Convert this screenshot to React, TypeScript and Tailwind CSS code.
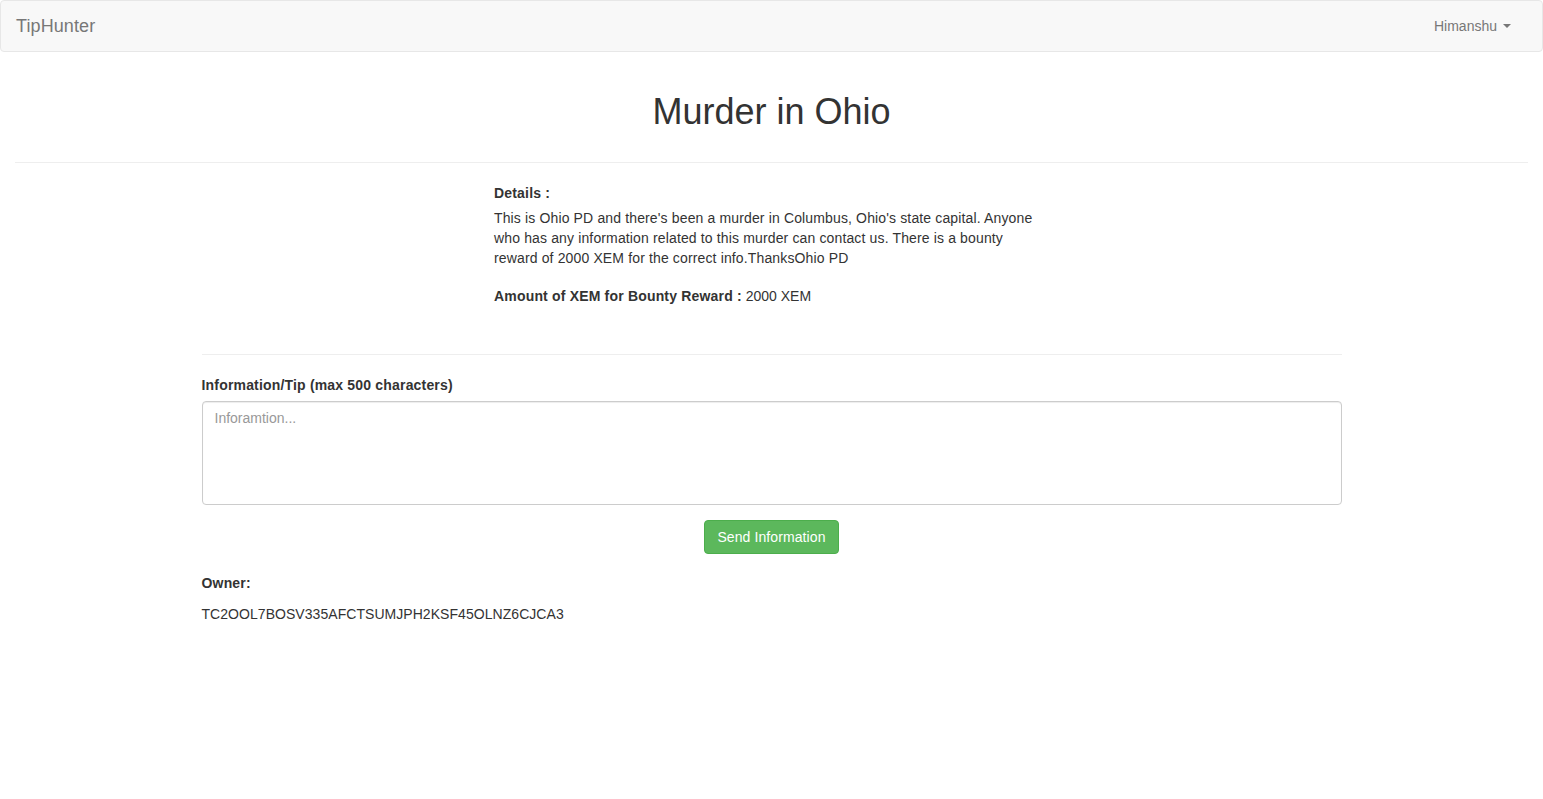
import React from "react";

export default function App() {
  return (
    <div
      className="min-h-[799px] bg-white text-[14px] leading-[20px] text-[#333]"
      style={{ fontFamily: '"Liberation Sans", Arial, sans-serif' }}
    >
      <nav className="h-[52px] rounded-[4px] border border-[#e7e7e7] bg-[#f8f8f8] flex items-center justify-between px-[15px]">
        <span className="text-[18px] leading-[20px] text-[#777] tracking-[0.1px]">TipHunter</span>
        <span className="flex items-center text-[14px] text-[#777] pr-[15px] mr-[1px]">
          Himanshu
          <span className="ml-[6px] inline-block w-0 h-0 border-x-[4px] border-x-transparent border-t-[4px] border-t-[#777]" />
        </span>
      </nav>

      <div className="pt-[40px] px-[15px]">
        <h1 className="text-center text-[36px] leading-[39.6px] font-medium text-[#333]">
          Murder in Ohio
        </h1>
        <hr className="mt-[30px] mb-[20px] border-0 border-t border-[#eee]" />
      </div>

      <div className="mx-auto w-[1170px] px-[15px]">
        <div className="ml-[292.5px] w-[555px]">
          <div className="font-bold mb-[5px] tracking-[0.18px]">Details :</div>
          <p className="mb-[18px] tracking-[0.14px]">
            This is Ohio PD and there's been a murder in Columbus, Ohio's state capital. Anyone who has any
            information related to this murder can contact us. There is a bounty reward of 2000 XEM for the
            correct info.ThanksOhio PD
          </p>
          <p>
            <span className="font-bold tracking-[0.18px]">Amount of XEM for Bounty Reward :</span> 2000 XEM
          </p>
        </div>

        <hr className="mt-[48px] mb-[20px] border-0 border-t border-[#eee]" />

        <div className="font-bold mb-[6px] tracking-[0.18px]">Information/Tip (max 500 characters)</div>
        <textarea
          placeholder="Inforamtion..."
          className="block w-full h-[104px] resize-none rounded-[4px] border border-[#ccc] px-[12px] py-[6px] text-[14px] leading-[20px] text-[#555] placeholder:text-[#999] shadow-[inset_0_1px_1px_rgba(0,0,0,0.075)] outline-none"
        />
        <div className="flex justify-center mt-[15px]">
          <button className="h-[34px] rounded-[4px] border border-[#4cae4c] bg-[#5cb85c] px-[12px] text-[14px] text-white tracking-[0.1px]">
            Send Information
          </button>
        </div>

        <div className="font-bold mt-[19px] tracking-[0.18px]">Owner:</div>
        <p className="mt-[11px] tracking-[0.05px]">TC2OOL7BOSV335AFCTSUMJPH2KSF45OLNZ6CJCA3</p>
      </div>
    </div>
  );
}
